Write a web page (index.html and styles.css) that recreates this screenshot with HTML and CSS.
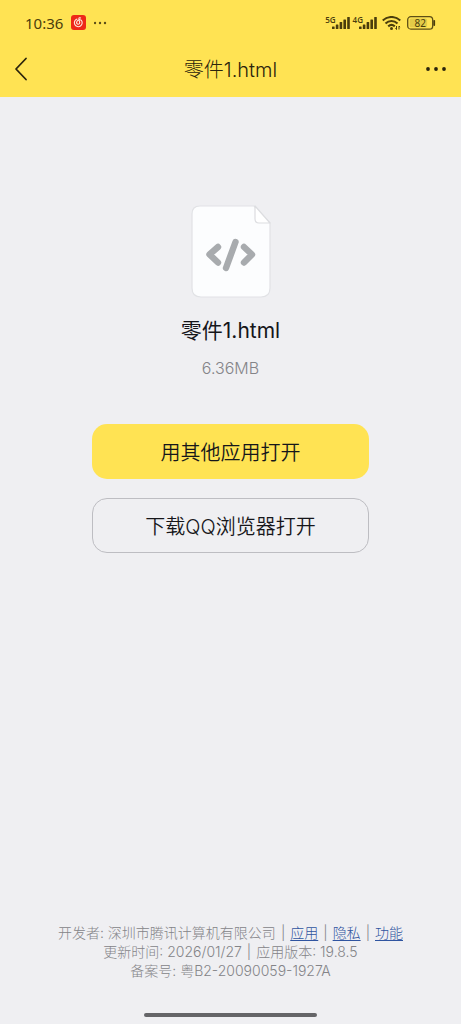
FILE: index.html
```html
<!DOCTYPE html>
<html lang="zh-CN">
<head>
<meta charset="utf-8">
<meta name="viewport" content="width=device-width, initial-scale=1">
<title>零件1.html</title>
<link rel="stylesheet" href="styles.css">
</head>
<body>
<header class="top">
  <div class="status">
    <div class="status-left">
      <time class="clock">10:36</time>
      <svg class="app-badge" width="15" height="15" viewBox="0 0 15 15" aria-hidden="true">
        <rect width="15" height="15" rx="3" fill="#ee2818"/>
        <path d="M6 4.1A3.9 3.9 0 1 0 10.2 5.2C9.2 4.4 6 4.9 5.6 7.3C5.3 9.6 8.7 9.9 8.7 7.6L7.9 3.8C7.8 2.7 8.8 2.5 9.6 3" fill="none" stroke="#ffe9e0" stroke-width="1.1" stroke-linecap="round"/>
      </svg>
      <svg width="14" height="4" viewBox="0 0 14 4" fill="#5b4d18" aria-hidden="true"><circle cx="1" cy="2" r="1.2"/><circle cx="6" cy="2" r="1.2"/><circle cx="11" cy="2" r="1.2"/></svg>
    </div>
    <div class="status-right">
      <div class="signal"><span>5G</span><svg width="18" height="12" viewBox="0 0 18 12" fill="#4a3d0c" aria-hidden="true"><rect y="9.6" width="2.6" height="2.4" rx=".5"/><rect x="3.8" y="7.6" width="2.6" height="4.4" rx=".5"/><rect x="7.6" y="5" width="2.6" height="7" rx=".5"/><rect x="11.4" y="2.6" width="2.6" height="9.4" rx=".5"/><rect x="15.2" width="2.6" height="12" rx=".5"/></svg></div>
      <div class="signal"><span>4G</span><svg width="18" height="12" viewBox="0 0 18 12" fill="#4a3d0c" aria-hidden="true"><rect y="9.6" width="2.6" height="2.4" rx=".5"/><rect x="3.8" y="7.6" width="2.6" height="4.4" rx=".5"/><rect x="7.6" y="5" width="2.6" height="7" rx=".5"/><rect x="11.4" y="2.6" width="2.6" height="9.4" rx=".5"/><rect x="15.2" width="2.6" height="12" rx=".5"/></svg></div>
      <svg class="wifi" width="19" height="14" viewBox="0 0 19 14" aria-hidden="true">
        <g fill="none" stroke="#4a3d0c" stroke-width="2.1"><path d="M.8 4.6C5.6-.2 13.4-.2 18.2 4.6"/><path d="M3.5 7.600C7 4.200 12 4.200 15.5 7.600"/><path d="M6.2 10.400C8.2 8.600 10.8 8.600 12.8 10.400"/></g>
        <circle cx="9.5" cy="12.4" r="1.5" fill="#4a3d0c"/>
        <path d="M14.5 10v3.5M13.4 12.4l1.1 1.1M17 13.5V10M18.1 11.1L17 10" fill="none" stroke="#4a3d0c"/>
      </svg>
      <svg class="battery" width="29" height="14" viewBox="0 0 29 14" role="img" aria-label="82%">
        <rect x=".7" y=".7" width="25" height="12.4" rx="3.2" fill="none" stroke="#5d4e14" stroke-width="1.3"/>
        <rect x="2.6" y="2.6" width="17.5" height="8.6" rx="1.5" fill="#e3cb48"/>
        <path d="M27.2 4.8v4.2" stroke="#4a3d0c" stroke-width="1.8" stroke-linecap="round"/>
        <text class="battery-text" x="13.2" y="10.6" text-anchor="middle">82</text>
      </svg>
    </div>
  </div>
  <nav class="navbar">
    <button class="nav-button" type="button" aria-label="返回"><svg width="14" height="24" viewBox="0 0 14 24"><path d="M12 1.5L2 12l10 10.5" fill="none" stroke="#2b240c" stroke-width="1.8" stroke-linecap="round" stroke-linejoin="round"/></svg></button>
    <h1 class="title">零件1.html</h1>
    <button class="nav-button nav-more" type="button" aria-label="更多"><svg width="22" height="4" viewBox="0 0 22 4" fill="#2b240c"><circle cx="3" cy="2" r="1.9"/><circle cx="11" cy="2" r="1.9"/><circle cx="19" cy="2" r="1.9"/></svg></button>
  </nav>
</header>
<main class="content">
  <svg class="file-icon" width="80" height="94" viewBox="0 0 80 94" aria-hidden="true">
    <path d="M9 1H63L79 18V83Q79 92 70 92H10Q1 92 1 83V9Q1 1 9 1Z" fill="#fcfdfe" stroke="#e1e2e5" stroke-width="1.2"/>
    <path d="M64 1V14Q64 18 68 18H79Z" fill="#fff" stroke="#dcdde0" stroke-width="1.2" stroke-linejoin="round"/>
    <path d="M27 42L18.500 49.500L27 57.500M44.500 37L35 63M53 42L61 49.500L53 57.500" fill="none" stroke="#a8abae" stroke-width="6.400" stroke-linecap="round" stroke-linejoin="round"/>
  </svg>
  <h2 class="file-name">零件1.html</h2>
  <p class="file-size">6.36MB</p>
  <div class="actions">
    <button class="action action-primary" type="button">用其他应用打开</button>
    <button class="action action-outline" type="button">下载QQ浏览器打开</button>
  </div>
</main>
<footer class="footer">
  <p>开发者: 深圳市腾讯计算机有限公司<span class="bar">|</span><a href="#app">应用</a><span class="bar">|</span><a href="#privacy">隐私</a><span class="bar">|</span><a href="#features">功能</a></p>
  <p>更新时间: 2026/01/27<span class="bar">|</span>应用版本: 19.8.5</p>
  <p>备案号: 粤B2-20090059-1927A</p>
  <div class="home-bar"></div>
</footer>
</body>
</html>
```
FILE: styles.css
```css
* {
  box-sizing: border-box;
}

body {
  margin: 0;
  min-height: 100vh;
  display: flex;
  flex-direction: column;
  background: #efeff2;
  color: #16161a;
  font-family: Inter, "Noto Sans CJK SC", sans-serif;
}

h1, h2, p {
  margin: 0;
}

button {
  font: inherit;
  color: inherit;
  cursor: pointer;
}

svg {
  display: block;
}

.top {
  background: #ffe353;
}

.status {
  display: flex;
  justify-content: space-between;
  align-items: center;
  height: 45px;
  padding: 0 25px;
}

.status-left,
.status-right,
.signal {
  display: flex;
  align-items: center;
}

.status-left {
  gap: 8px;
}

.clock {
  font: 15px/20px "Noto Sans", sans-serif;
  color: #4a3d0c;
}

.signal {
  align-items: flex-end;
  margin-right: 3px;
}

.signal span {
  align-self: flex-start;
  margin-right: -4px;
  font: 600 8px/5px "Open Sans", sans-serif;
  color: #4a3d0c;
}

.wifi {
  margin: 0 6px 0 2px;
}

.battery-text {
  font: 10px "Noto Sans", sans-serif;
  fill: #4a3d0c;
}

.navbar {
  display: flex;
  justify-content: space-between;
  align-items: center;
  height: 52px;
  padding: 0 14px 5px;
}

.nav-button {
  display: flex;
  align-items: center;
  width: 36px;
  height: 36px;
  padding: 0;
  border: 0;
  background: none;
}

.nav-more {
  justify-content: flex-end;
}

.title {
  padding-top: 2px;
  font-size: 20px;
  font-weight: 300;
  line-height: 28px;
  color: #2b240c;
}

.content {
  flex: 1;
  display: flex;
  flex-direction: column;
  align-items: center;
  padding-top: 108px;
}

.file-name {
  margin-top: 17px;
  font-size: 21px;
  font-weight: 400;
  line-height: 30px;
}

.file-size {
  margin-top: 10px;
  font-size: 16px;
  font-weight: 300;
  line-height: 24px;
  color: #848488;
}

.actions {
  display: flex;
  flex-direction: column;
  gap: 19px;
  width: 60%;
  margin-top: 44px;
}

.action {
  height: 55px;
  padding: 3px 6px 0;
  border: 1px solid transparent;
  border-radius: 15px;
  font-size: 20px;
  font-weight: 350;
  line-height: 28px;
}

.action-primary {
  background: #ffe353;
}

.action-outline {
  background: none;
  border-color: #bdbdc2;
}

.footer {
  display: flex;
  flex-direction: column;
  align-items: center;
  padding-bottom: 7px;
  font-size: 14px;
  font-weight: 300;
  line-height: 19px;
  color: #848488;
}

.footer a {
  color: #2f54a0;
  text-underline-offset: 2px;
}

.bar {
  margin: 0 5px;
}

.home-bar {
  width: 173px;
  height: 4px;
  margin-top: 33px;
  border-radius: 2px;
  background: #656568;
}
```
